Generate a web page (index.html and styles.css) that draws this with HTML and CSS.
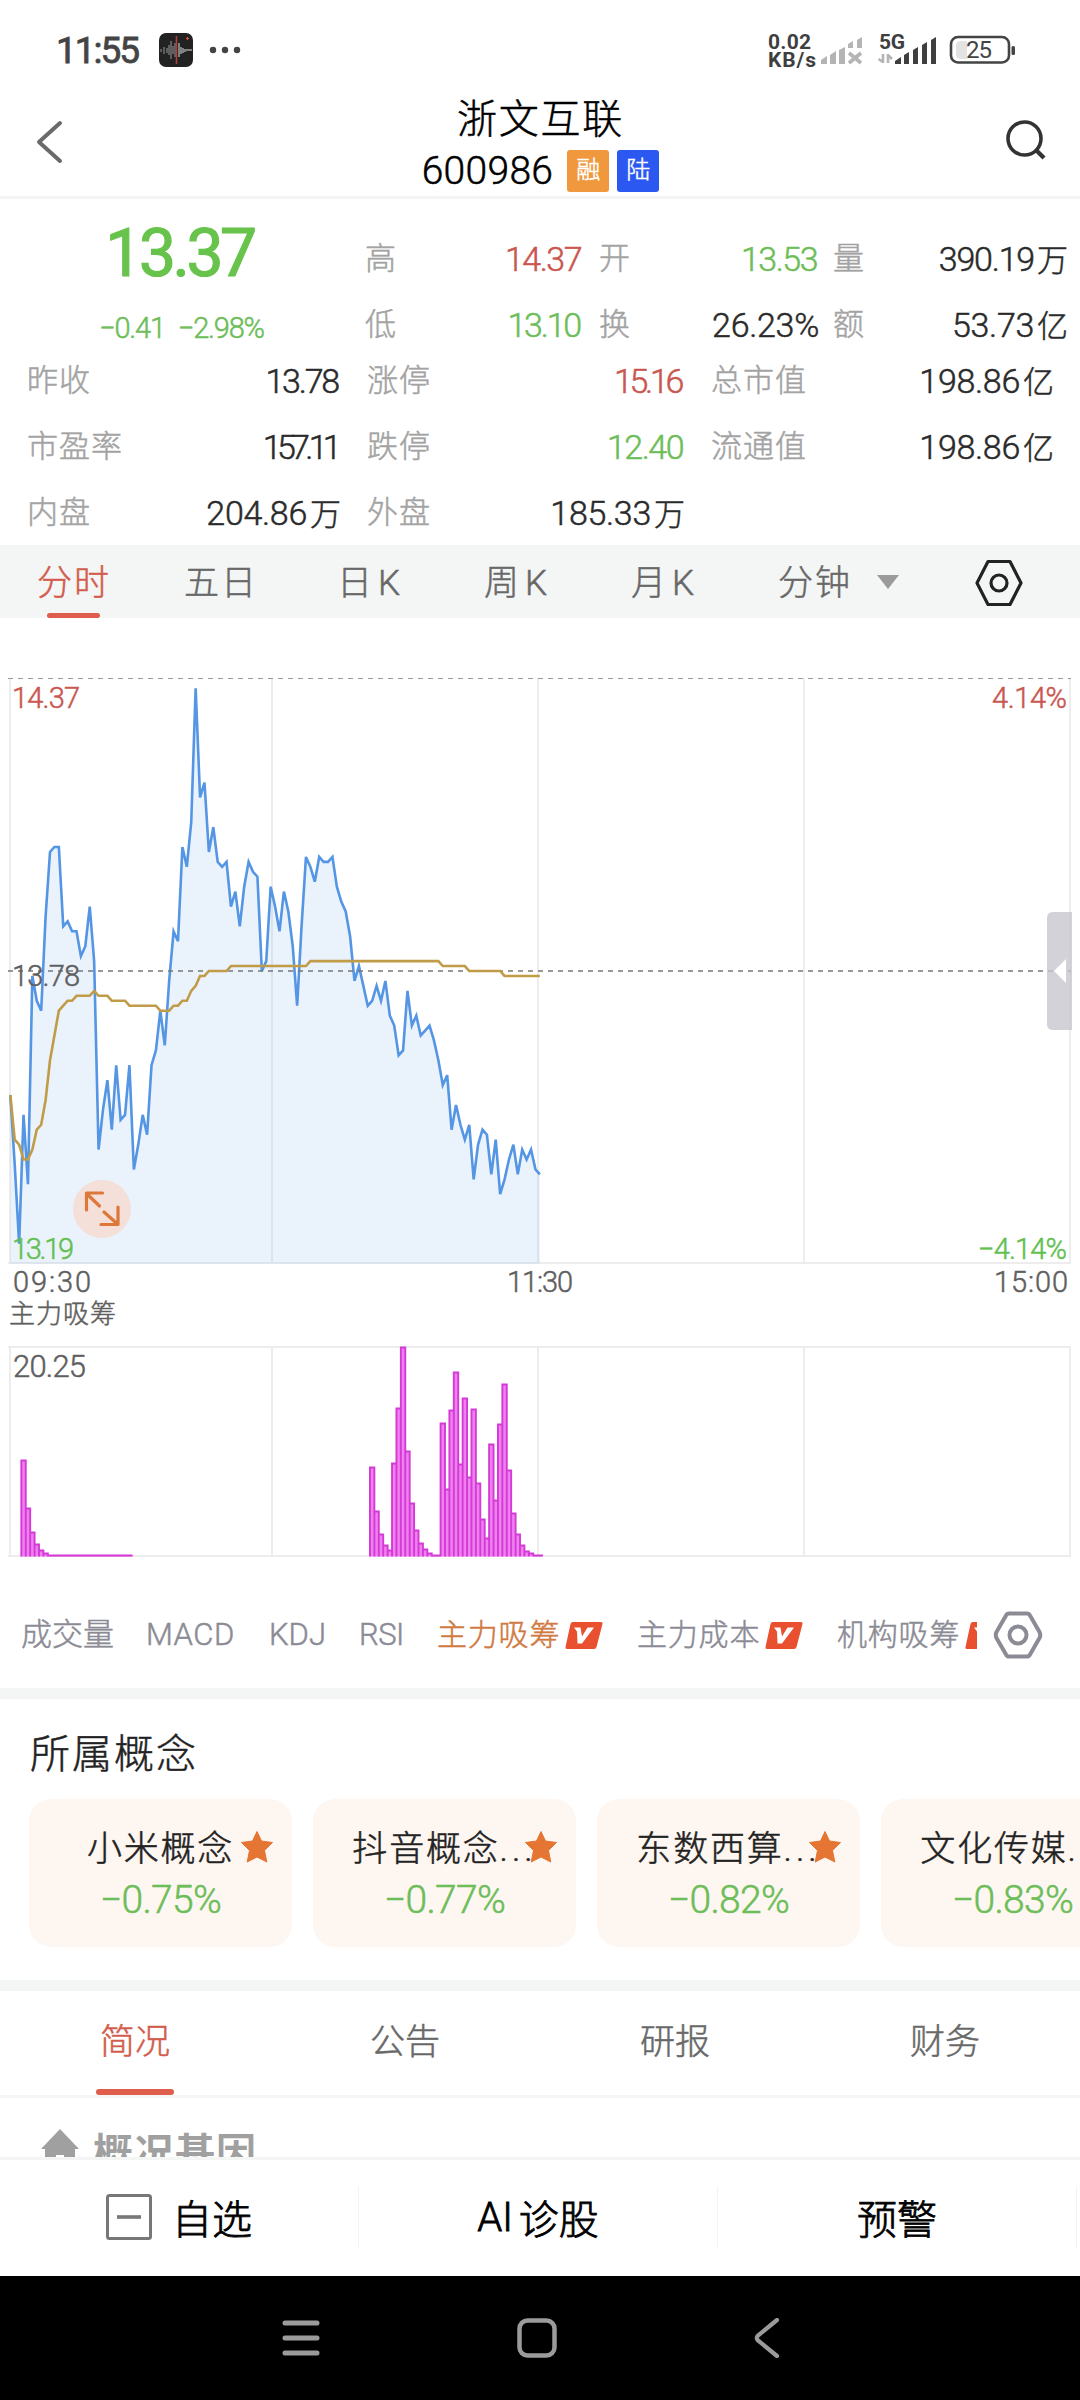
FILE: index.html
```html
<!DOCTYPE html>
<html lang="zh-CN">
<head>
<meta charset="utf-8">
<title>浙文互联 600986</title>
<link rel="stylesheet" href="styles.css">
</head>
<body>
<div class="status">
  <span class="clock">11:55</span>
  <svg class="app" width="34" height="34" viewBox="0 0 34 34"><rect width="34" height="34" rx="7" fill="#222"/><path d="M2 16v3M5 14v7M8 15v5M10 12v10M12 8v18M14 13v8M16 10v14" stroke="#999" stroke-width="1"/><path d="M17.5 3v28" stroke="#a8433c" stroke-width="1.6"/><path d="M20 10v14M22 14v7M24 15v5M26 16v3M28 16v2M30 16v2M32 16v2" stroke="#ddd" stroke-width="1"/><path d="M27 5.500h3M28.500 4v3" stroke="#e0503f" stroke-width="1.200"/></svg>
  <svg class="dots" width="32" height="8" viewBox="0 0 32 8" fill="#444"><circle cx="4" cy="4" r="3.200"/><circle cx="16" cy="4" r="3.200"/><circle cx="28" cy="4" r="3.200"/></svg>
  <svg class="signals" width="250" height="42" viewBox="768 29 250 42">
    <g class="net-text"><text x="768" y="48.500" textLength="43">0.02</text><text x="768" y="66.500" textLength="48">KB/s</text><text x="879" y="48.500" textLength="26">5G</text></g>
    <path fill="#b4b4b4" d="M821 64v-4l6-4v8zM830 64V55l6-4v13zM839 64V50l6-3v17zM848 48v-4l5-3v7zM857 48V40l5-3v11z"/>
    <path d="M849 53l12 10M861 53l-12 10" stroke="#b4b4b4" stroke-width="3.600"/>
    <path d="M883 54v9M878.500 59l4.500 3M888 63v-9M888 55l4 4" stroke="#b4b4b4" stroke-width="2.600" fill="none"/>
    <path fill="#3f3f3f" d="M895 64v-3l6-4v7zM904 64V55l5-3v12zM913 64V50l5-3v17zM922 64V45l5-3v22zM931 64V40l5-3v27z"/>
    <rect x="951" y="37" width="58" height="25.500" rx="7" fill="#fff" stroke="#444" stroke-width="2.600"/>
    <path d="M967 41h-6q-5 0-5 5v8q0 5 5 5h6z" fill="#e3e3e3"/>
    <rect x="1011.500" y="46" width="3.500" height="9" rx="1.500" fill="#444"/>
    <text class="battery" x="966" y="57.500" textLength="26">25</text>
  </svg>
</div>
<header class="head">
  <svg width="30" height="46" viewBox="0 0 30 46"><path d="M25 4 4 23l21 19" fill="none" stroke="#6a6a6a" stroke-width="4" stroke-linecap="round" stroke-linejoin="round"/></svg>
  <div class="title">
    <div class="name">浙文互联</div>
    <div class="code"><span>600986</span><b class="tag orange">融</b><b class="tag blue">陆</b></div>
  </div>
  <svg width="42" height="44" viewBox="0 0 42 44" fill="none" stroke="#333" stroke-width="3.600"><circle cx="20.500" cy="19.500" r="16.500"/><path d="m32 31 8 8" stroke-width="4.200"/></svg>
</header>
<section class="quote">
  <div class="last"><div class="price">13.37</div><div class="delta"><span>−0.41</span><span class="dp">−2.98%</span></div></div>
  <dl class="top">
    <div><dt>高</dt><dd class="up k1">14.37</dd></div><div><dt>开</dt><dd class="down k1">13.53</dd></div><div><dt>量</dt><dd class="k0">390.19<i>万</i></dd></div>
    <div><dt>低</dt><dd class="down k2">13.10</dd></div><div><dt>换</dt><dd>26.23%</dd></div><div><dt>额</dt><dd>53.73<i>亿</i></dd></div>
  </dl>
</section>
<dl class="more">
  <div><dt>昨收</dt><dd class="k2">13.78</dd></div><div><dt>涨停</dt><dd class="up k3">15.16</dd></div><div><dt>总市值</dt><dd>198.86<i>亿</i></dd></div>
  <div><dt>市盈率</dt><dd class="k5">157.11</dd></div><div><dt>跌停</dt><dd class="down k1">12.40</dd></div><div><dt>流通值</dt><dd>198.86<i>亿</i></dd></div>
  <div><dt>内盘</dt><dd>204.86<i>万</i></dd></div><div><dt>外盘</dt><dd>185.33<i>万</i></dd></div>
</dl>
<nav class="periods">
  <span class="on">分时</span><span>五日</span><span class="day">日<em>K</em></span><span>周<em>K</em></span><span>月<em>K</em></span><span>分钟</span>
  <svg class="caret" width="22" height="14" viewBox="0 0 22 14"><path d="M0 0h22L11 14z" fill="#9b9b9b"/></svg>
  <svg class="hex" width="48" height="48" viewBox="0 0 48 48" fill="none" stroke="#222" stroke-width="3.200" stroke-linejoin="round"><path d="M13 2.500h22L46 24 35 45.500H13L2 24z"/><circle cx="24" cy="24" r="8"/></svg>
</nav>
<svg class="chart" width="1080" height="722" viewBox="0 618 1080 722">
  <path class="grid" d="M10 678V1263M272 678V1263M538 678V1263M804 678V1263M1070 678V1263M8 1263H1071"/>
  <g transform="translate(10.300 971) scale(4.413 -4.960)">
    <path class="area" d="M0-25 1-39 2-55 3-29 4-43 5-1 6-6 7-8 8 11 9 24 10 25 11 25 12 9 13 10 14 8 15 8 16 3 17 5 18 13 19 2 20-36 21-28 22-22 23-32 24-19 25-30 26-29 27-19 28-40 29-35 30-29 31-33 32-19 33-16 34-8 35-15 36-2 37 8 38 6 39 25 40 21 41 30 42 57 43 35 44 38 45 24 46 29 47 22 48 21 49 22 50 13 51 16 52 9 53 17 54 22 55 20 56 19 57 0 58 2 59 17 60 13 61 8 62 16 63 12 64 5 65-7 66 9 67 23 68 21 69 18 70 23 71 22 72 22 73 23 74 17 75 14 76 12 77 7 78-2 79 1 80-3 81-7 82-6 83-3 84-6 85-2 86-9 87-11 88-17 89-16 90-4 91-11 92-9 93-13 94-12 95-11 96-14 97-18 98-23 99-21 100-32 101-27 102-31 103-34 104-31 105-42 106-35 107-32 108-33 109-41 110-34 111-45 112-42 113-38 114-35 115-41 116-36 117-38 118-36 119-40 120-41V-59H0z"/>
    <path class="line" d="M0-25 1-39 2-55 3-29 4-43 5-1 6-6 7-8 8 11 9 24 10 25 11 25 12 9 13 10 14 8 15 8 16 3 17 5 18 13 19 2 20-36 21-28 22-22 23-32 24-19 25-30 26-29 27-19 28-40 29-35 30-29 31-33 32-19 33-16 34-8 35-15 36-2 37 8 38 6 39 25 40 21 41 30 42 57 43 35 44 38 45 24 46 29 47 22 48 21 49 22 50 13 51 16 52 9 53 17 54 22 55 20 56 19 57 0 58 2 59 17 60 13 61 8 62 16 63 12 64 5 65-7 66 9 67 23 68 21 69 18 70 23 71 22 72 22 73 23 74 17 75 14 76 12 77 7 78-2 79 1 80-3 81-7 82-6 83-3 84-6 85-2 86-9 87-11 88-17 89-16 90-4 91-11 92-9 93-13 94-12 95-11 96-14 97-18 98-23 99-21 100-32 101-27 102-31 103-34 104-31 105-42 106-35 107-32 108-33 109-41 110-34 111-45 112-42 113-38 114-35 115-41 116-36 117-38 118-36 119-40 120-41"/>
  </g>
  <path class="dash" d="M8 678.500H1071"/><path class="dash mid" d="M8 971H1071"/>
  <path class="avg" transform="translate(10.300 971) scale(4.413 -4.960)" d="M0-25 1-34 2-35 3-38 4-38 5-36 6-32 7-31 8-26 9-18 10-13 11-8 12-7 13-6 14-6 15-5 18-5 19-4 20-5 22-5 23-6 26-6 27-7 33-7 34-8 36-8 37-7 38-7 39-6 40-6 41-4 42-3 43-1 44-1 45 0 49 0 50 1 67 1 68 2 97 2 98 1 103 1 104 0 111 0 112-1 120-1"/>
  <circle cx="102" cy="1209" r="29" fill="#f6d9cf" fill-opacity=".8"/>
  <path d="M86.500 1210v-17h16M87 1194l12.500 12M104 1212l13.500 12M118 1207v17.500h-17" fill="none" stroke="#dd783a" stroke-width="3.200" stroke-linecap="round" stroke-linejoin="round"/>
  <g class="axis">
    <text class="red" x="12" y="707.500" textLength="68">14.37</text>
    <text x="12" y="985.500" textLength="68">13.78</text>
    <text class="green" x="12" y="1258.500" textLength="62">13.19</text>
    <text class="red" x="992" y="707.500" textLength="75">4.14%</text>
    <text class="green" x="978" y="1258.500" textLength="89">−4.14%</text>
    <text x="13" y="1291.500" textLength="78">09:30</text>
    <text x="507" y="1291.500" textLength="66">11:30</text>
    <text x="994" y="1291.500" textLength="74">15:00</text>
    <text class="cn" x="9" y="1323" textLength="107">主力吸筹</text>
  </g>
  <path d="M1072 912h-19q-6 0-6 6v106q0 6 6 6h19z" fill="#c8c7ce" fill-opacity=".8"/><path d="M1066 959v24l-12-12z" fill="#fff"/>
</svg>
<svg class="chart" width="1080" height="240" viewBox="0 1340 1080 240">
  <path class="grid" d="M10 1347V1556M272 1347V1556M538 1347V1556M804 1347V1556M1070 1347V1556M8 1347H1071M8 1556H1071"/>
  <text class="axis vol" x="13" y="1377" textLength="73">20.25</text>
  <path class="bars" transform="translate(8.100 1556.500) scale(4.413 -1)" d="M3 0V96h1V0M4 0V48h1V0M5 0V24h1V0M6 0V12h1V0M7 0V6h1V0M8 0V3h1V0M9 0V1H28V0M82 0V89h1V0M83 0V45h1V0M84 0V22h1V0M85 0V11h1V0M86 0V6h1V0M87 0V93h1V0M88 0V148h1V0M89 0V209h1V0M90 0V105h1V0M91 0V53h1V0M92 0V26h1V0M93 0V13h1V0M94 0V7h1V0M95 0V3h1V0M96 0V1h2V0M98 0V133h1V0M99 0V67h1V0M100 0V146h1V0M101 0V184h1V0M102 0V92h1V0M103 0V158h1V0M104 0V79h1V0M105 0V147h1V0M106 0V73h1V0M107 0V37h1V0M108 0V18h1V0M109 0V112h1V0M110 0V56h1V0M111 0V132h1V0M112 0V172h1V0M113 0V86h1V0M114 0V43h1V0M115 0V22h1V0M116 0V11h1V0M117 0V5h1V0M118 0V3h1V0M119 0V1h2V0"/>
</svg>
<nav class="indicators">
  <div class="strip">
    <span class="cn3">成交量</span><span class="macd">MACD</span><span class="kdj">KDJ</span><span class="rsi">RSI</span>
    <span class="vip on">主力吸筹<svg width="38" height="27" viewBox="0 0 38 27"><use href="#v"/></svg></span>
    <span class="vip">主力成本<svg width="38" height="27" viewBox="0 0 38 27"><use href="#v"/></svg></span>
    <span class="vip">机构吸筹<svg width="38" height="27" viewBox="0 0 38 27"><g id="v"><path d="M8 0h28q2 0 1.500 2l-6 23q-.5 2-2.500 2H2q-2 0-1.500-2l5-23Q6 0 8 0z" fill="#e8502f"/><path d="M9 5.500h6.500l1.500 9 5.500-9H29l-12 16h-4.500L12 9.500z" fill="#fff"/></g></svg></span>
  </div>
  <svg width="50" height="48" viewBox="0 0 50 48" fill="none" stroke="#8b8b95" stroke-width="4" stroke-linejoin="round"><path d="M16 2.500h18q2 0 3 2L46.500 21q1.500 3 0 6L37 43.500q-1 2-3 2H16q-2 0-3-2L3.500 27q-1.500-3 0-6L13 4.500q1-2 3-2z"/><circle cx="25" cy="24" r="8.500"/></svg>
</nav>
<section class="concepts">
  <h2>所属概念</h2>
  <div class="cards">
    <div class="card"><p>小米概念</p><strong>−0.75%</strong><svg class="star" width="34" height="34" viewBox="0 0 34 34"><path id="s" d="M17 1.500 21.500 11 32.500 12.500 24.500 20.500 26.800 32 17 27 7.200 32 9.500 20.500 1.500 12.500 12.500 11z" fill="#e57532" stroke="#e57532" stroke-linejoin="round"/></svg></div>
    <div class="card"><p>抖音概念<i>...</i></p><strong>−0.77%</strong><svg class="star" width="34" height="34" viewBox="0 0 34 34"><use href="#s"/></svg></div>
    <div class="card"><p>东数西算<i>...</i></p><strong>−0.82%</strong><svg class="star" width="34" height="34" viewBox="0 0 34 34"><use href="#s"/></svg></div>
    <div class="card"><p>文化传媒<i>...</i></p><strong>−0.83%</strong></div>
  </div>
</section>
<nav class="tabs"><span class="on">简况</span><span>公告</span><span>研报</span><span>财务</span></nav>
<section class="profile"><svg width="38" height="38" viewBox="0 0 38 38"><path d="M19 0 38 20h-4v16H23V26h-8v10H4V20H0z" fill="#a0a0a0"/></svg><h3>概况基因</h3></section>
<footer class="actions">
  <span><svg width="46" height="46" viewBox="0 0 46 46" fill="none" stroke="#777" stroke-width="3"><rect x="1.500" y="1.500" width="43" height="43" rx="2"/><path d="M11 23h24" stroke-width="3.600"/></svg>自选</span><span>AI<i>诊股</i></span><span>预警</span>
</footer>
<div class="sysnav">
  <svg width="38" height="36" viewBox="0 0 38 36" stroke="#9b9b9b" stroke-width="5" stroke-linecap="round"><path d="M3 3h32M3 18h32M3 33h32"/></svg>
  <svg width="40" height="40" viewBox="0 0 40 40"><rect x="2.500" y="2.500" width="35" height="35" rx="8" fill="none" stroke="#9b9b9b" stroke-width="4.500"/></svg>
  <svg width="26" height="40" viewBox="0 0 26 40"><path d="M23 2 4 17.500q-2.500 2.500 0 5L23 38" fill="none" stroke="#9b9b9b" stroke-width="4.200" stroke-linecap="round"/></svg>
</div>
</body>
</html>
```
FILE: styles.css
```css
* { box-sizing: border-box; }
body { margin: 0; width: 1080px; height: 2400px; overflow: hidden; background: #fff; font-family: Roboto, "Noto Sans CJK SC", sans-serif; font-weight: 300; -webkit-text-stroke: .5px; color: #2a2a2a; display: flex; flex-direction: column; }
body > * { flex-shrink: 0; }
svg { display: block; -webkit-text-stroke: 0; }
i, em { font-style: normal; }
dl, dd, p, h2, h3 { margin: 0; font-weight: 300; }

.status { height: 92px; display: flex; align-items: center; padding: 8px 62px 0 56px; }
.clock { font-size: 37px; font-weight: 400; letter-spacing: -2px; color: #444; width: 103px; -webkit-text-stroke: .8px; }
.dots { margin-left: 16px; }
.signals { margin-left: auto; }
.net-text { font-size: 21px; font-weight: 700; fill: #3f3f3f; }
.battery { font-size: 24px; font-weight: 400; fill: #444; }

.head { height: 107px; border-bottom: 3px solid #f5f5f5; display: flex; justify-content: space-between; padding: 0 34px 0 35px; }
.head > svg { margin-top: 27px; }
.title { display: flex; flex-direction: column; align-items: center; color: #000; padding: 2px 0 0 12px; }
.name { font-size: 40px; line-height: 52px; letter-spacing: 1.800px; }
.code { display: flex; align-items: center; font-size: 39px; height: 54px; }
.code span { letter-spacing: .3px; }
.tag { width: 42px; height: 42px; border-radius: 3px; color: #fff; font-size: 24px; line-height: 41px; text-align: center; font-weight: 300; }
.orange { background: #ef983d; margin-left: 14px; }
.blue { background: #2b58f0; margin-left: 8px; }

.quote { height: 148px; padding-top: 27px; display: flex; }
.last { width: 365px; padding-right: 6px; text-align: center; color: #67c34b; }
.price { font-size: 66px; line-height: 56px; font-weight: 400; letter-spacing: -3.500px; -webkit-text-stroke: 1.200px; }
.delta { display: flex; justify-content: center; gap: 13px; font-size: 29px; line-height: 92px; letter-spacing: -1.200px; color: #6dbd59; padding-left: 4px; }
.top { display: grid; grid-template-columns: 218px 220px 233px; column-gap: 16px; grid-auto-rows: 66px; width: 703px; }
.top > div, .more > div { display: flex; justify-content: space-between; line-height: 66px; font-size: 34px; }
dt { font-size: 31px; letter-spacing: 1px; color: #a3a3a3; }
dd { letter-spacing: -.3px; }
dd i { font-size: 31px; letter-spacing: 0; margin-left: 3px; }
.top > div:nth-child(3n) { margin-left: -2px; }
.k0 { letter-spacing: -1.200px; }
.k1 { letter-spacing: -1.500px; padding-right: 2px; }
.k2 { letter-spacing: -2.200px; padding-right: 3px; }
.k3 { letter-spacing: -3.300px; padding-right: 4px; }
.k5 { letter-spacing: -4.700px; padding-right: 4px; }
.up { color: #c9564f; }
.down { color: #6dbd59; }
.more { height: 198px; padding: 1px 26px 0 27px; display: grid; grid-template-columns: 314px 318px 343px; column-gap: 26px; grid-auto-rows: 66px; }

.periods { height: 73px; background: #f4f6f6; display: flex; align-items: center; color: #686868; font-size: 35px; letter-spacing: 2px; padding-left: 37px; }
.periods span { width: 147px; line-height: 77px; height: 73px; position: relative; flex-shrink: 0; }
.periods em { margin-left: 4px; }
.periods .day { margin-left: 6px; }
.periods .on { color: #d25c4d; }
.periods .on::after { content: ""; position: absolute; left: 10px; bottom: 0; width: 53px; height: 5px; border-radius: 3px; background: #de5d4d; }
.periods .caret { margin-left: -48px; }
.periods .hex { margin: 3px 0 0 76px; }

.grid { stroke: #ededed; stroke-width: 2; fill: none; }
.area { fill: #5c9be8; fill-opacity: .13; }
.line, .avg { fill: none; stroke: #5495e4; stroke-width: 2.600; vector-effect: non-scaling-stroke; }
.avg { stroke: #c09c48; }
.dash { stroke: #999; stroke-width: 1.200; stroke-dasharray: 5 5; }
.mid { stroke: #777; stroke-width: 1.500; }
.axis { font-size: 29px; fill: #5f5f5f; stroke: #5f5f5f; stroke-width: .5px; font-weight: 300; }
.axis .red { fill: #c9564f; stroke: #c9564f; }
.axis .green { fill: #62c050; stroke: #62c050; }
.axis .cn { font-size: 26px; font-weight: 300; }
.vol { font-size: 31px; }
.bars { fill: #f080f0; stroke: #d43ad6; stroke-width: 1.900; vector-effect: non-scaling-stroke; }

.indicators { height: 108px; display: flex; align-items: center; padding: 2px 0 0 21px; font-size: 31px; color: #8b8b95; }
.strip { width: 956px; display: flex; overflow: hidden; white-space: nowrap; }
.strip span { flex-shrink: 0; line-height: 62px; }
.cn3 { width: 125px; }
.macd { width: 123px; letter-spacing: .5px; }
.kdj { width: 90px; letter-spacing: 0; }
.rsi { width: 78px; letter-spacing: -.5px; }
.vip { width: 200px; display: flex; align-items: center; font-size: 30px; letter-spacing: .8px; }
.vip svg { margin-left: 5px; }
.vip.on { color: #d07a42; }
.indicators > svg { margin-left: 16px; }

.concepts { height: 292px; border-top: 11px solid #f4f6f6; padding-left: 29px; overflow: hidden; }
.concepts h2 { font-size: 40px; letter-spacing: 2px; line-height: 58px; padding: 27px 0 15px 1px; color: #222; }
.cards { display: flex; gap: 21px; }
.card { position: relative; width: 263px; height: 148px; flex-shrink: 0; border-radius: 22px; background: #fef6f1; text-align: center; }
.card p { font-size: 35px; letter-spacing: 1.800px; line-height: 52px; padding-top: 25px; white-space: nowrap; color: #222; }
.card p i { letter-spacing: 4px; }
.card strong { display: block; font-size: 39px; line-height: 48px; font-weight: 300; letter-spacing: -.7px; color: #6dbd59; }
.star { position: absolute; left: 211px; top: 31px; }

.tabs { height: 118px; border-top: 11px solid #f4f6f6; border-bottom: 3px solid #f5f5f5; display: grid; grid-template-columns: repeat(4, 1fr); text-align: center; font-size: 35px; line-height: 103px; color: #686868; }
.tabs span { position: relative; height: 104px; }
.tabs .on { color: #d25c4d; }
.tabs .on::after { content: ""; position: absolute; left: 96px; bottom: 0; width: 78px; height: 6px; border-radius: 3px; background: #de5d4d; }
.profile { height: 59px; overflow: hidden; display: flex; padding: 31px 0 0 41px; gap: 14px; }
.profile h3 { font-size: 40px; line-height: 50px; font-weight: 700; letter-spacing: 1px; color: #a0a0a0; -webkit-text-stroke: 0; }
.profile svg { flex-shrink: 0; }

.actions { height: 119px; border-top: 3px solid #f4f6f6; padding: 26px 3px 28px 0; display: flex; color: #000; font-size: 40px; -webkit-text-stroke: .8px; }
.actions span { width: 359px; border-right: 1px solid #f3f3f3; display: flex; align-items: center; justify-content: center; gap: 20px; }
.actions span:nth-child(2) { gap: 6px; }
.sysnav { height: 124px; background: #000; display: flex; align-items: center; padding-left: 282px; gap: 197px; }
```
